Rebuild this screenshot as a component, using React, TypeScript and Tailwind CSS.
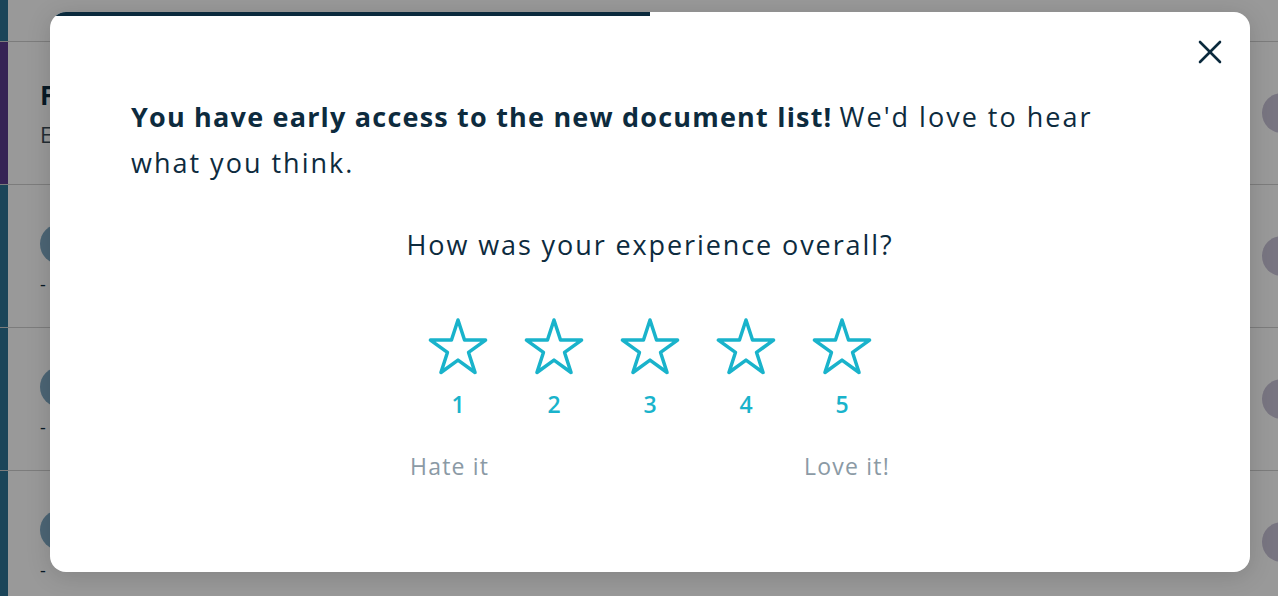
const rows = [
  { bar: "bg-[#5a3b8e]", title: "F", sub: "E", avatar: "bg-[#b9a9d6]" },
  { bar: "bg-[#2e7395]", title: "", sub: "-", avatar: "bg-[#7fa9c4]" },
  { bar: "bg-[#2e7395]", title: "", sub: "-", avatar: "bg-[#7fa9c4]" },
  { bar: "bg-[#2e7395]", title: "", sub: "-", avatar: "bg-[#7fa9c4]" },
];

function Star() {
  return (
    <svg width="64" height="64" viewBox="0 0 64 64" fill="none">
      <polygon
        points="32,6 38.52,26.02 59.58,26.04 42.56,38.43 49.05,58.46 32,46.1 14.95,58.46 21.44,38.43 4.42,26.04 25.48,26.02"
        stroke="#19b3cb"
        strokeWidth="3.5"
        strokeLinejoin="round"
      />
    </svg>
  );
}

function CloseIcon() {
  return (
    <svg width="24" height="24" viewBox="0 0 24 24" fill="none" stroke="#0b2a3d" strokeWidth="2.6" strokeLinecap="round">
      <line x1="2" y1="2" x2="22" y2="22" />
      <line x1="22" y1="2" x2="2" y2="22" />
    </svg>
  );
}

function BackgroundList() {
  return (
    <div className="flex h-full w-full flex-col bg-white font-['Open_Sans',sans-serif] text-[#0d2b3e]">
      <div className="flex h-[42px] shrink-0 border-b border-[#cfcfcf]">
        <div className="w-[8px] bg-[#2e7395]" />
      </div>
      {rows.map((row, i) => (
        <div key={i} className="flex h-[143px] shrink-0 border-b border-[#cfcfcf]">
          <div className={`w-[8px] ${row.bar}`} />
          <div className="flex flex-1 items-center justify-between pl-[32px]">
            {i === 0 ? (
              <div className="flex flex-col gap-[6px]">
                <span className="text-[26px] font-bold leading-[36px]">{row.title}</span>
                <span className="text-[22px] leading-[30px] text-[#3b4a55]">{row.sub}</span>
              </div>
            ) : (
              <div className="flex flex-col gap-[10px] pt-[6px]">
                <div className={`h-[40px] w-[40px] rounded-full ${row.avatar}`} />
                <span className="text-[18px] leading-[20px]">{row.sub}</span>
              </div>
            )}
            <div className="mr-[-24px] h-[40px] w-[40px] rounded-full bg-[#c9c3d8]" />
          </div>
        </div>
      ))}
    </div>
  );
}

export default function App() {
  return (
    <div className="relative h-[596px] w-full overflow-hidden">
      <BackgroundList />
      <div className="absolute inset-0 flex bg-black/40 pl-[50px] pt-[12px]">
        <div className="relative h-[560px] w-[1200px] overflow-hidden rounded-[16px] bg-white font-['Open_Sans',sans-serif] text-[#0d2b3e] shadow-[0_4px_24px_rgba(0,0,0,0.15)]">
          <div className="absolute left-0 top-0 h-[4px] w-[600px] bg-[#0b2a3d]" />
          <button className="absolute right-[28px] top-[28px]">
            <CloseIcon />
          </button>
          <div className="flex flex-col px-[81px] pt-[82px]">
            <p className="max-w-[990px] text-[27px] leading-[46px]">
              <span className="font-bold tracking-[1.2px]">You have early access to the new document list!</span>{" "}
              <span className="tracking-[2px]">We'd love to hear what you think.</span>
            </p>
            <p className="mt-[43px] text-center text-[27px] leading-[32px] tracking-[1.9px]">
              How was your experience overall?
            </p>
            <div className="mx-auto mt-[53px] flex w-[480px] flex-col">
              <div className="flex">
                {[1, 2, 3, 4, 5].map((n) => (
                  <div key={n} className="flex w-[96px] flex-col items-center">
                    <Star />
                    <span className="mt-[14px] text-[23px] font-semibold leading-[24px] text-[#19b3cb]">
                      {n}
                    </span>
                  </div>
                ))}
              </div>
              <div className="mt-[36px] flex justify-between text-[23px] leading-[28px] tracking-[1.2px] text-[#8b9aa5]">
                <span>Hate it</span>
                <span>Love it!</span>
              </div>
            </div>
          </div>
        </div>
      </div>
    </div>
  );
}
